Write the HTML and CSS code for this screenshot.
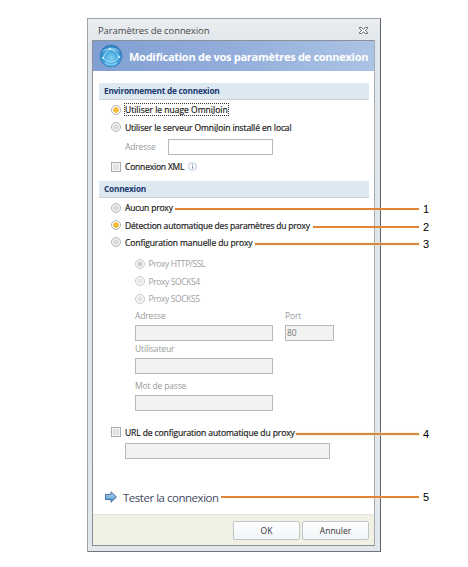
FILE: index.html
```
<!DOCTYPE html>
<html lang="fr">
<head>
    <meta charset="UTF-8">
    <title>Paramètres de connexion</title>
    <link rel="stylesheet" href="styles.css">
</head>
<body>

    <div class="window">
        <div class="titlebar">
            <span class="title">Paramètres de connexion</span>
            <svg class="close" width="9" height="7" viewBox="0 0 9 7">
                <path d="M0.5 0.5h2l2 1.7 2-1.7h2v1L6.300 3.500l2.200 2v1h-2l-2-1.700-2 1.700h-2v-1l2.200-2L0.500 1.500z" fill="#fff" stroke="#555" stroke-width="0.900"/>
            </svg>
        </div>

        <div class="panel">
            <div class="banner">
                <svg class="globe" width="24" height="24" viewBox="0 0 24 24">
                    <defs>
                        <radialGradient id="globe-fill" cx="0.5" cy="0.6" r="0.6">
                            <stop offset="0" stop-color="#7fd2f2"/>
                            <stop offset="0.6" stop-color="#3e9fda"/>
                            <stop offset="1" stop-color="#2676bd"/>
                        </radialGradient>
                    </defs>
                    <circle cx="12" cy="12" r="11" fill="url(#globe-fill)" stroke="#3c80c0" stroke-width="0.700"/>
                    <path d="M3 8a10 8 0 0 1 18 0q-9-4-18 0z" fill="#a9dcf3" opacity="0.6"/>
                    <path d="M11 5Q6 8 4 14q3 4 8 4 5 0 8-5-2-6-9-8z" fill="none" stroke="#b4e2f7" stroke-width="0.900"/>
                    <path d="M6 19q6 3.500 12 0" fill="none" stroke="#7ccaf0" stroke-width="1.500"/>
                    <circle cx="11" cy="5" r="1" fill="#d8f2fc"/>
                    <circle cx="4.200" cy="14" r="1" fill="#d8f2fc"/>
                    <circle cx="20" cy="13" r="1" fill="#d8f2fc"/>
                </svg>
                <h1>Modification de vos paramètres de connexion</h1>
            </div>

            <div class="content">
                <h2>Environnement de connexion</h2>
                <div class="environment">
                    <div class="option"><span class="radio checked"></span><span class="text focused">Utiliser le nuage OmniJoin</span></div>
                    <div class="option"><span class="radio"></span><span class="text tight">Utiliser le serveur OmniJoin installé en local</span></div>
                    <div class="server">
                        <span class="label">Adresse</span>
                        <span class="field white"></span>
                    </div>
                    <div class="option xml">
                        <span class="checkbox"></span><span class="text tighter">Connexion XML</span>
                        <svg class="info" width="9" height="9" viewBox="0 0 9 9">
                            <circle cx="4.500" cy="4.500" r="3.900" fill="#fff" stroke="#a3b9d0" stroke-width="0.800"/>
                            <path d="M4.500 2v1M4.500 3.800v3" stroke="#7390b0"/>
                        </svg>
                    </div>
                </div>

                <h2>Connexion</h2>
                <div class="connection">
                    <div class="option"><span class="radio"></span><span class="text tighter">Aucun proxy</span></div>
                    <div class="option"><span class="radio checked"></span><span class="text tighter">Détection automatique des paramètres du proxy</span></div>
                    <div class="option"><span class="radio"></span><span class="text tight">Configuration manuelle du proxy</span></div>

                    <div class="manual">
                        <div class="option disabled"><span class="radio selected"></span><span class="text">Proxy HTTP/SSL</span></div>
                        <div class="option disabled"><span class="radio"></span><span class="text">Proxy SOCKS4</span></div>
                        <div class="option disabled"><span class="radio"></span><span class="text">Proxy SOCKS5</span></div>
                        <div class="fields">
                            <div class="group address"><span class="label">Adresse</span><span class="field"></span></div>
                            <div class="group port"><span class="label">Port</span><span class="field">80</span></div>
                        </div>
                        <div class="group user"><span class="label">Utilisateur</span><span class="field"></span></div>
                        <div class="group password"><span class="label">Mot de passe</span><span class="field"></span></div>
                    </div>

                    <div class="option url"><span class="checkbox"></span><span class="text tight">URL de configuration automatique du proxy</span></div>
                    <span class="field url-field"></span>
                </div>

                <div class="test">
                    <svg width="12" height="12" viewBox="0 0 12 12">
                        <defs>
                            <linearGradient id="arrow-fill" x1="0" y1="0" x2="0" y2="1">
                                <stop offset="0" stop-color="#c5e4f8"/>
                                <stop offset="1" stop-color="#3f86c8"/>
                            </linearGradient>
                        </defs>
                        <path d="M0.500 3.500h5.500V0.800L11.500 6 6 11.200V8.500H0.500z" fill="url(#arrow-fill)" stroke="#45719f"/>
                    </svg>
                    <span>Tester la connexion</span>
                </div>
            </div>

            <div class="footer">
                <button type="button">OK</button>
                <button type="button">Annuler</button>
            </div>
        </div>
    </div>

    <!-- Callout lines laid over the dialog -->
    <div class="callout c1"><i></i><b>1</b></div>
    <div class="callout c2"><i></i><b>2</b></div>
    <div class="callout soft c3"><i></i><b>3</b></div>
    <div class="callout soft c4"><i></i><b>4</b></div>
    <div class="callout c5"><i></i><b>5</b></div>

</body>
</html>
```

FILE: styles.css
```
* {
    box-sizing: border-box;
}

body {
    margin: 0;
    padding: 18px 0 0 87px;
    height: 567px;
    background: #fff;
    font-family: "Open Sans", "Noto Sans", sans-serif;
    font-size: 8.5px;
    color: #222;
    position: relative;
    overflow: hidden;
}

.window {
    width: 294px;
    height: 534px;
    display: flex;
    flex-direction: column;
    border: 1px solid #a0a3a6;
    border-right: 1px solid #5c636b;
    border-bottom: 1px solid #6c7379;
    background: linear-gradient(#eceef0, #dfe6eb 24px, #e1e7eb);
    padding: 0 5px 5px 4px;
}

.titlebar {
    height: 21px;
    display: flex;
    align-items: center;
    justify-content: space-between;
    padding: 2px 7px 0 6px;
}

.title {
    font-size: 9.5px;
    letter-spacing: -0.1px;
    color: #484848;
    white-space: nowrap;
}

.panel {
    flex: 1;
    display: flex;
    flex-direction: column;
    border: 1px solid #8b9096;
    border-right-color: #a6abaf;
    background: #fff;
}

.banner {
    height: 30px;
    display: flex;
    align-items: center;
    padding-left: 6px;
    gap: 6px;
    background: linear-gradient(90deg, #819fd3, #94aedb 50%, #abc3e4);
}

.globe {
    flex-shrink: 0;
}

h1 {
    margin: 0;
    font-size: 11px;
    font-weight: 700;
    letter-spacing: -0.27px;
    color: #fff;
    white-space: nowrap;
}

.content {
    flex: 1;
    padding: 12px 5px 0 6px;
}

h2 {
    margin: 0;
    height: 17px;
    padding-left: 5px;
    line-height: 16px;
    font-size: 8.3px;
    font-weight: 700;
    letter-spacing: -0.24px;
    color: #203a70;
    background: #dde9f1;
    border-bottom: 1px solid #cbd1d5;
    white-space: nowrap;
}

.environment {
    height: 81px;
    padding: 1px 0 0 12px;
}

.connection {
    height: 288px;
    padding: 1px 0 0 12px;
}

.option {
    height: 17.4px;
    display: flex;
    align-items: center;
    gap: 4px;
    white-space: nowrap;
}

.text {
    line-height: 11px;
    -webkit-text-stroke: 0.2px;
}

.tight {
    letter-spacing: -0.1px;
}

.tighter {
    letter-spacing: -0.19px;
}

.focused {
    outline: 1px dotted #333;
}

.radio {
    width: 10px;
    height: 10px;
    border: 1px solid #b0b2b5;
    border-radius: 50%;
    background: radial-gradient(#d6d8da 35%, #f5f5f5 60%);
}

.radio.checked {
    background: radial-gradient(#f5bc38 0 2.5px, #fff 3.2px);
}

.disabled {
    gap: 3.5px;
    color: #a0a0a0;
}

.disabled .text {
    letter-spacing: -0.4px;
    -webkit-text-stroke: 0;
}

.disabled .radio {
    border-color: #c6c8ca;
    background: radial-gradient(#e5e6e7 35%, #fafafa 65%);
}

.disabled .radio.selected {
    background: radial-gradient(#c8c9ca 0 2px, #f7f7f7 3px);
}

.checkbox {
    width: 10px;
    height: 10px;
    border: 1px solid #a9adb1;
    background: #e1e3e5;
    box-shadow: inset 0 0 0 1px #f5f5f5;
}

.label {
    color: #999;
    line-height: 11px;
    letter-spacing: -0.15px;
    white-space: nowrap;
}

.field {
    display: block;
    height: 16px;
    border: 1px solid #b8b8b8;
    background: #f2f2f2;
    padding-left: 1px;
    line-height: 13px;
    color: #777;
}

.field.white {
    width: 105px;
    background: #fff;
}

.server {
    height: 22px;
    display: flex;
    align-items: center;
    padding-left: 14px;
}

.server .label {
    width: 43px;
}

.xml {
    height: 16px;
    margin-top: 1px;
}

.manual {
    padding: 4px 0 0 24px;
}

.fields {
    display: flex;
    gap: 12px;
    margin-top: 4px;
}

.group {
    width: 138px;
}

.group .label {
    display: block;
    height: 14px;
    margin-top: -1px;
    margin-bottom: 1px;
}

.port {
    width: 49px;
}

.user {
    margin-top: 3px;
}

.password {
    margin-top: 7px;
}

.url {
    margin-top: 12px;
}

.url-field {
    width: 205px;
    margin: 2px 0 0 14px;
}

.test {
    height: 22px;
    display: flex;
    align-items: center;
    gap: 6px;
    padding-left: 6px;
    font-size: 11.5px;
    letter-spacing: -0.48px;
    color: #3f4961;
    white-space: nowrap;
}

.footer {
    height: 31px;
    display: flex;
    justify-content: flex-end;
    gap: 2px;
    padding: 6px 5px 0 0;
    background: #f0f1e2;
    border-top: 1px solid #e5e6dc;
}

button {
    width: 67px;
    height: 19px;
    padding: 0;
    border: 1px solid #c0c6cb;
    border-radius: 2px;
    background: linear-gradient(#fff, #f0f4f8);
    font-family: inherit;
    font-size: 8.5px;
    color: #333;
}

.callout {
    position: absolute;
    right: 36px;
    height: 12px;
    display: flex;
    align-items: center;
    gap: 4px;
}

.callout i {
    flex: 1;
    height: 2px;
    background: #e28636;
}

.callout.soft i {
    background: #cf8b4e;
    box-shadow: 0 0 1px 1px rgba(250, 225, 170, 0.5);
}

.callout b {
    width: 9px;
    font: 11px/12px "Liberation Sans", Arial, sans-serif;
    color: #000;
}

.c1 {
    left: 175px;
    top: 203px;
}

.c2 {
    left: 313px;
    top: 221px;
}

.c3 {
    left: 255px;
    top: 238px;
}

.c4 {
    left: 296px;
    top: 428px;
}

.c5 {
    left: 221px;
    top: 491px;
}
```
